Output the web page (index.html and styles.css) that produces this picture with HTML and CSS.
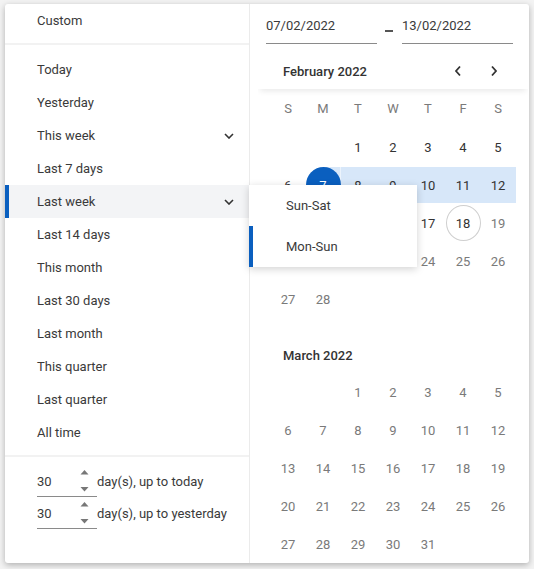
FILE: index.html
```html
<!DOCTYPE html>
<html>
<head>
<meta charset="utf-8">
<link rel="stylesheet" href="styles.css">
</head>
<body>
<div class="panel">
  <div class="presets">
    <div class="sec sec-custom">
      <div class="item">Custom</div>
    </div>
    <div class="sec sec-list">
      <div class="item">Today</div>
      <div class="item">Yesterday</div>
      <div class="item"><span>This week</span><svg class="chev" width="10" height="6" viewBox="0 0 10 6"><polyline points="1,1 5,5 9,1" fill="none" stroke="#333" stroke-width="1.6"/></svg></div>
      <div class="item">Last 7 days</div>
      <div class="item active"><span>Last week</span><svg class="chev" width="10" height="6" viewBox="0 0 10 6"><polyline points="1,1 5,5 9,1" fill="none" stroke="#333" stroke-width="1.6"/></svg></div>
      <div class="item">Last 14 days</div>
      <div class="item">This month</div>
      <div class="item">Last 30 days</div>
      <div class="item">Last month</div>
      <div class="item">This quarter</div>
      <div class="item">Last quarter</div>
      <div class="item">All time</div>
    </div>
    <div class="sec sec-nums">
      <div class="numrow">
        <div class="num"><span>30</span><svg class="spin" width="9" height="32" viewBox="0 0 9 32"><polygon points="0.5,9.5 4.5,5 8.5,9.5" fill="#777"/><polygon points="0.5,22 4.5,26.5 8.5,22" fill="#777"/></svg></div>
        <span class="lbl">day(s), up to today</span>
      </div>
      <div class="numrow">
        <div class="num"><span>30</span><svg class="spin" width="9" height="32" viewBox="0 0 9 32"><polygon points="0.5,9.5 4.5,5 8.5,9.5" fill="#777"/><polygon points="0.5,22 4.5,26.5 8.5,22" fill="#777"/></svg></div>
        <span class="lbl">day(s), up to yesterday</span>
      </div>
    </div>
  </div>

  <div class="cal">
    <div class="dates">
      <div class="date">07/02/2022</div>
      <div class="dash"><span></span></div>
      <div class="date">13/02/2022</div>
    </div>
    <div class="scroll">
      <div class="mhead">
        <span class="mtitle">February 2022</span>
        <div class="nav">
          <span class="navbtn"><svg width="8" height="12" viewBox="0 0 8 12"><polyline points="6,1.5 2,6 6,10.5" fill="none" stroke="#333" stroke-width="1.8"/></svg></span>
          <span class="navbtn"><svg width="8" height="12" viewBox="0 0 8 12"><polyline points="2,1.5 6,6 2,10.5" fill="none" stroke="#333" stroke-width="1.8"/></svg></span>
        </div>
      </div>
      <div class="grid dow">
        <span>S</span><span>M</span><span>T</span><span>W</span><span>T</span><span>F</span><span>S</span>
      </div>
      <div class="grid days">
        <span></span><span></span>
        <span class="c"><span class="d">1</span></span>
        <span class="c"><span class="d">2</span></span>
        <span class="c"><span class="d">3</span></span>
        <span class="c"><span class="d">4</span></span>
        <span class="c"><span class="d">5</span></span>
        <span class="c"><span class="d">6</span></span>
        <span class="c start"><span class="d sel">7</span></span>
        <span class="c in"><span class="d">8</span></span>
        <span class="c in"><span class="d">9</span></span>
        <span class="c in"><span class="d">10</span></span>
        <span class="c in"><span class="d">11</span></span>
        <span class="c in"><span class="d">12</span></span>
        <span class="c"><span class="d">13</span></span>
        <span class="c"><span class="d">14</span></span>
        <span class="c"><span class="d">15</span></span>
        <span class="c"><span class="d">16</span></span>
        <span class="c"><span class="d">17</span></span>
        <span class="c"><span class="d today">18</span></span>
        <span class="c fut"><span class="d">19</span></span>
        <span class="c fut"><span class="d">20</span></span>
        <span class="c fut"><span class="d">21</span></span>
        <span class="c fut"><span class="d">22</span></span>
        <span class="c fut"><span class="d">23</span></span>
        <span class="c fut"><span class="d">24</span></span>
        <span class="c fut"><span class="d">25</span></span>
        <span class="c fut"><span class="d">26</span></span>
        <span class="c fut"><span class="d">27</span></span>
        <span class="c fut"><span class="d">28</span></span>
      </div>
      <div class="mtitle2">March 2022</div>
      <div class="grid days fut-all">
        <span></span><span></span>
        <span class="c"><span class="d">1</span></span>
        <span class="c"><span class="d">2</span></span>
        <span class="c"><span class="d">3</span></span>
        <span class="c"><span class="d">4</span></span>
        <span class="c"><span class="d">5</span></span>
        <span class="c"><span class="d">6</span></span>
        <span class="c"><span class="d">7</span></span>
        <span class="c"><span class="d">8</span></span>
        <span class="c"><span class="d">9</span></span>
        <span class="c"><span class="d">10</span></span>
        <span class="c"><span class="d">11</span></span>
        <span class="c"><span class="d">12</span></span>
        <span class="c"><span class="d">13</span></span>
        <span class="c"><span class="d">14</span></span>
        <span class="c"><span class="d">15</span></span>
        <span class="c"><span class="d">16</span></span>
        <span class="c"><span class="d">17</span></span>
        <span class="c"><span class="d">18</span></span>
        <span class="c"><span class="d">19</span></span>
        <span class="c"><span class="d">20</span></span>
        <span class="c"><span class="d">21</span></span>
        <span class="c"><span class="d">22</span></span>
        <span class="c"><span class="d">23</span></span>
        <span class="c"><span class="d">24</span></span>
        <span class="c"><span class="d">25</span></span>
        <span class="c"><span class="d">26</span></span>
        <span class="c"><span class="d">27</span></span>
        <span class="c"><span class="d">28</span></span>
        <span class="c"><span class="d">29</span></span>
        <span class="c"><span class="d">30</span></span>
        <span class="c"><span class="d">31</span></span>
      </div>
    </div>
  </div>

  <div class="submenu">
    <div class="subitem">Sun-Sat</div>
    <div class="subitem active">Mon-Sun</div>
  </div>
</div>
</body>
</html>
```

FILE: styles.css
```css
html, body {
  margin: 0;
  padding: 0;
}
body {
  background: #f3f3f3;
  font-family: Roboto, "Noto Sans", sans-serif;
  font-size: 13px;
  color: #3a3a3a;
  width: 534px;
  height: 569px;
  overflow: hidden;
}
.panel {
  position: relative;
  margin: 4px 0 0 5px;
  width: 524px;
  height: 559px;
  background: #fff;
  border-radius: 3px;
  box-shadow: 0 2px 6px rgba(0, 0, 0, 0.28);
  display: flex;
  overflow: hidden;
}

/* presets column */
.presets {
  width: 244px;
  flex: none;
  border-right: 1px solid #ebebeb;
  display: flex;
  flex-direction: column;
}
.sec-custom {
  padding-bottom: 6px;
}
.sec-list {
  border-top: 2px solid #f2f2f2;
  padding: 8px 0 6px;
}
.sec-nums {
  border-top: 2px solid #f2f2f2;
  padding-top: 8px;
}
.item {
  height: 33px;
  display: flex;
  align-items: center;
  justify-content: space-between;
  padding: 0 15px 0 32px;
  color: #3a3a3a;
}
.item.active {
  background: #f3f4f6;
  box-shadow: inset 4px 0 0 #0a5fbf;
}
.chev {
  display: block;
}
.numrow {
  height: 32px;
  display: flex;
  align-items: flex-start;
  padding-left: 32px;
}
.num {
  width: 60px;
  height: 32px;
  box-sizing: border-box;
  border-bottom: 1px solid #8a8a8a;
  display: flex;
  align-items: center;
  justify-content: space-between;
  padding-right: 8px;
  padding-top: 1px;
}
.spin {
  display: block;
}
.lbl {
  line-height: 32px;
  padding-top: 1px;
}

/* calendar column */
.cal {
  flex: 1;
  min-width: 0;
  display: flex;
  flex-direction: column;
}
.dates {
  display: flex;
  padding: 0 16px;
}
.date {
  width: 111px;
  height: 40px;
  box-sizing: border-box;
  border-bottom: 1px solid #8a8a8a;
  display: flex;
  align-items: flex-end;
  padding-bottom: 7px;
  line-height: 20px;
}
.dash {
  width: 25px;
  display: flex;
  justify-content: center;
}
.dash span {
  display: block;
  width: 8px;
  height: 1.5px;
  margin-top: 26px;
  margin-right: 2px;
  background: #555;
}
.scroll {
  margin: 9px 0 0 8px;
  width: 270px;
  flex: 1;
  overflow: hidden;
}
.mhead {
  position: relative;
  z-index: 1;
  height: 36px;
  display: flex;
  align-items: center;
  padding: 0 16px 0 25px;
  background: #fff;
  box-shadow: 0 4px 6px -2px rgba(0, 0, 0, 0.09);
}
.mtitle {
  font-weight: 500;
  color: #333;
}
.nav {
  margin-left: auto;
  display: flex;
}
.navbtn {
  width: 36px;
  height: 36px;
  display: flex;
  align-items: center;
  justify-content: center;
}
.grid {
  display: grid;
  grid-template-columns: repeat(7, 35px);
  grid-auto-rows: 38px;
  margin-left: 12.5px;
}
.dow {
  grid-auto-rows: 39px;
}
.dow span {
  display: flex;
  align-items: center;
  justify-content: center;
  color: #7a7a7a;
}
.c {
  display: flex;
  align-items: center;
  justify-content: center;
}
.c.in {
  background: linear-gradient(#d7e7f9, #d7e7f9) center / 100% 36px no-repeat;
}
.c.start {
  background: linear-gradient(#d7e7f9, #d7e7f9) right center / 50% 36px no-repeat;
}
.d {
  width: 36px;
  height: 36px;
  box-sizing: border-box;
  border-radius: 50%;
  display: flex;
  align-items: center;
  justify-content: center;
  color: #333;
}
.d.sel {
  background: #0a5fbf;
  color: #fff;
}
.d.today {
  border: 1px solid #cfcfcf;
}
.c.fut .d,
.fut-all .d {
  color: #7a7a7a;
}
.mtitle2 {
  margin-top: 20px;
  height: 35px;
  display: flex;
  align-items: center;
  padding-left: 25px;
  font-weight: 500;
  color: #333;
}

/* submenu */
.submenu {
  position: absolute;
  left: 244px;
  top: 181px;
  width: 168px;
  background: #fff;
  box-shadow: 0 2px 8px rgba(0, 0, 0, 0.18);
  z-index: 2;
}
.subitem {
  height: 41px;
  display: flex;
  align-items: center;
  padding-left: 37px;
  color: #3a3a3a;
}
.subitem.active {
  box-shadow: inset 4px 0 0 #0a5fbf;
}
```
